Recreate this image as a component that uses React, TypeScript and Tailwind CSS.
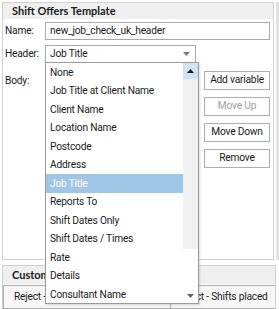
import React from 'react';

const options = [
  'None',
  'Job Title at Client Name',
  'Client Name',
  'Location Name',
  'Postcode',
  'Address',
  'Job Title',
  'Reports To',
  'Shift Dates Only',
  'Shift Dates / Times',
  'Rate',
  'Details',
  'Consultant Name',
];

const SideButton: React.FC<{ label: string; disabled?: boolean }> = ({ label, disabled }) => (
  <button
    className={
      'h-[19px] w-[66px] border border-[#adadad] bg-white leading-none ' +
      (disabled ? 'text-[#a0a0a0]' : 'text-[#1a1a1a]')
    }
  >
    {label}
  </button>
);

export default function App() {
  const selected = 'Job Title';

  return (
    <div className="relative h-[309px] w-[279px] overflow-hidden bg-white font-['Roboto',Arial,sans-serif] text-[10.2px] tracking-[-0.2px] text-[#1a1a1a]">
      <div className="flex h-full">
        <div className="flex w-[276px] flex-col pl-[2px] pt-[2px]">
          {/* Template group */}
          <div className="flex h-[258px] w-[272px] flex-col border border-[#d0d0d0]">
            <div className="flex h-[16px] items-center bg-[#efefef] pl-[9px] font-['Lato',Arial,sans-serif] text-[11px] font-bold tracking-normal">
              Shift Offers Template
            </div>
            <div className="mt-[3px] flex items-center">
              <span className="w-[42px] pl-[2px]">Name:</span>
              <div className="flex h-[18px] w-[225px] items-center border border-[#a9a9a9] pl-[4px]">
                new_job_check_uk_header
              </div>
            </div>
            <div className="mt-[5px] flex items-center">
              <span className="w-[42px] pl-[2px]">Header:</span>
              <div className="flex h-[18px] w-[151px] items-center justify-between border border-[#a9a9a9] pl-[4px] pr-[4px]">
                <span>{selected}</span>
                <svg width="7" height="4" viewBox="0 0 7 4" className="mr-[1px]">
                  <path d="M0 0h7L3.5 4z" fill="#7a7a7a" />
                </svg>
              </div>
            </div>
            <div className="mt-[3px] flex">
              <span className="mt-[7px] w-[42px] pl-[2px]">Body:</span>
              <div className="h-[186px] w-[153px] border border-[#a9a9a9]" />
              <div className="ml-[6px] mt-[5px] flex flex-col gap-[7px]">
                <SideButton label="Add variable" />
                <SideButton label="Move Up" disabled />
                <SideButton label="Move Down" />
                <SideButton label="Remove" />
              </div>
            </div>
          </div>

          {/* Custom section */}
          <div className="mt-[5px] flex flex-1 flex-col border border-b-0 border-[#d0d0d0]">
            <div className="flex h-[18px] items-center bg-[#efefef] pl-[9px] font-['Lato',Arial,sans-serif] text-[11px] font-bold tracking-normal">
              Custom Responses
            </div>
            <div className="flex overflow-hidden pt-[1px]">
              <button className="flex h-[24px] w-[168px] shrink-0 items-center whitespace-nowrap border border-[#adadad] bg-[#f7f7f7] pl-[10px]">
                Reject - Not available
              </button>
              <button className="flex h-[24px] w-[110px] shrink-0 items-center whitespace-nowrap border border-l-0 border-[#adadad] bg-[#f7f7f7] pl-[6px]">
                Reject - Shifts placed
              </button>
            </div>
          </div>
        </div>
        <div className="mt-[2px] h-[258px] w-[3px] bg-[#e2e2e2]" />
      </div>

      {/* Open dropdown list */}
      <div className="absolute left-[45px] top-[62px] flex h-[242px] w-[154px] border border-[#9a9a9a] bg-white shadow-[1px_1px_2px_rgba(0,0,0,0.15)]">
        <div className="flex flex-1 flex-col">
          {options.map((o) => (
            <div
              key={o}
              className={
                'flex h-[18.5px] shrink-0 items-center pl-[4px] ' +
                (o === selected ? 'bg-[#9fc6e7] text-white' : '')
              }
            >
              {o}
            </div>
          ))}
        </div>
        <div className="flex w-[15px] flex-col">
          <div className="flex h-[16px] items-center justify-center bg-[#cde4f7]">
            <svg width="7" height="4" viewBox="0 0 7 4">
              <path d="M3.5 0L7 4H0z" fill="#1a1a1a" />
            </svg>
          </div>
          <div className="h-[170px] bg-[#f0f0f0]" />
          <div className="flex flex-1 items-end justify-center pb-[5px]">
            <svg width="7" height="4" viewBox="0 0 7 4">
              <path d="M0 0h7L3.5 4z" fill="#606060" />
            </svg>
          </div>
        </div>
      </div>
    </div>
  );
}
